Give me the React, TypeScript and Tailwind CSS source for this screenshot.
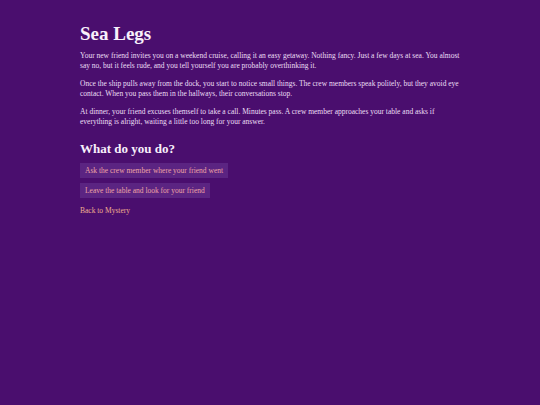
export default function App() {
  return (
    <div className="min-h-[405px] bg-[#4a0e6e] font-['Liberation_Serif',serif] text-[#ecdff5]">
      <div className="mx-auto w-[380px] pt-[22px]">
        <h1 className="text-[19px] font-bold leading-[23px] text-[#f8f0fb]">Sea Legs</h1>
        <div className="mt-[6px] flex flex-col gap-[8px] text-[7.5px] leading-[10px]">
          <p>
            Your new friend invites you on a weekend cruise, calling it an easy getaway. Nothing fancy. Just a few days at sea. You almost say no, but it feels rude, and you tell yourself you are probably overthinking it.
          </p>
          <p>
            Once the ship pulls away from the dock, you start to notice small things. The crew members speak politely, but they avoid eye contact. When you pass them in the hallways, their conversations stop.
          </p>
          <p>
            At dinner, your friend excuses themself to take a call. Minutes pass. A crew member approaches your table and asks if everything is alright, waiting a little too long for your answer.
          </p>
        </div>
        <h2 className="mt-[13px] text-[13px] font-bold leading-[17px] text-[#f8f0fb]">What do you do?</h2>
        <div className="mt-[6px] flex flex-col items-start gap-[5px]">
          <button className="bg-[#5b2482] px-[5px] py-[3px] text-[7.5px] leading-[9px] text-[#eea3a4]">
            Ask the crew member where your friend went
          </button>
          <button className="bg-[#5b2482] px-[5px] py-[3px] text-[7.5px] leading-[9px] text-[#eea3a4]">
            Leave the table and look for your friend
          </button>
        </div>
        <a href="#" className="mt-[8px] block text-[7.5px] leading-[10px] text-[#f2b08f]">
          Back to Mystery
        </a>
      </div>
    </div>
  )
}
